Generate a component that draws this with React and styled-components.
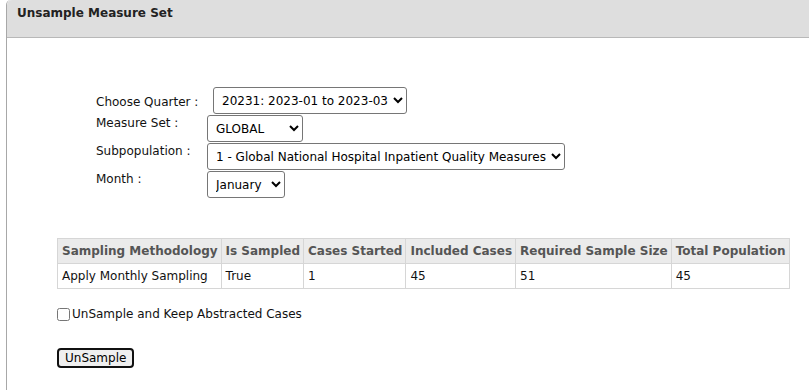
import React from 'react';
import styled, { createGlobalStyle } from 'styled-components';

const GlobalStyle = createGlobalStyle`
  body {
    margin: 0;
    background: #fff;
    font-family: "DejaVu Sans", Verdana, sans-serif;
    font-size: 12px;
    color: #000;
  }
`;

const Panel = styled.div`
  margin-left: 6px;
  min-height: 390px;
  border-left: 1px solid #a8a8a8;
  border-top-left-radius: 5px;
`;

const PanelHeader = styled.div`
  height: 38px;
  box-sizing: border-box;
  padding: 6px 10px;
  background: #dedede;
  border-bottom: 1px solid #b8b8b8;
  border-top-left-radius: 5px;
  font-weight: bold;
  font-size: 12px;
  color: #222;
`;

const PanelBody = styled.div`
  padding: 49px 0 0 50px;
`;

const FormGrid = styled.div`
  display: grid;
  grid-template-columns: 111px auto;
  row-gap: 1px;
  margin-left: 39px;
  justify-content: start;
`;

const Label = styled.div`
  padding-top: ${(p) => (p.$center ? '8px' : '1px')};
  color: #111;
`;

const Select = styled.select`
  justify-self: start;
  height: 27px;
  margin-left: ${(p) => p.$offset || 0}px;
  padding: 0 2px 0 4px;
  font-family: "DejaVu Sans", Verdana, sans-serif;
  font-size: 12px;
  color: #000;
  background: #fff;
  border: 1px solid #767676;
  border-radius: 3px;
`;

const DataTable = styled.table`
  margin-top: 40px;
  border-collapse: collapse;
  border: 1px solid #cfcfcf;

  th, td {
    border: 1px solid #d6d6d6;
    padding: 5px 3px 5px 4px;
    text-align: left;
    white-space: nowrap;
  }

  th {
    background: #ebebeb;
    color: #555;
    font-weight: bold;
  }

  td {
    color: #111;
  }
`;

const CheckRow = styled.label`
  display: flex;
  align-items: center;
  gap: 2px;
  margin-top: 18px;
  color: #111;

  input {
    margin: 0;
    width: 13px;
    height: 13px;
  }
`;

const Button = styled.button`
  margin-top: 27px;
  height: 20px;
  padding: 0 6px;
  font-family: "DejaVu Sans", Verdana, sans-serif;
  font-size: 12px;
  color: #000;
  background: #efefef;
  border: 2px solid #111;
  border-radius: 4px;
`;

const columns = [
  'Sampling Methodology',
  'Is Sampled',
  'Cases Started',
  'Included Cases',
  'Required Sample Size',
  'Total Population',
];

const row = ['Apply Monthly Sampling', 'True', '1', '45', '51', '45'];

export default function App() {
  return (
    <>
      <GlobalStyle />
      <Panel>
        <PanelHeader>Unsample Measure Set</PanelHeader>
        <PanelBody>
          <FormGrid>
            <Label $center>Choose Quarter :</Label>
            <Select $offset={6} defaultValue="20231">
              <option value="20231">20231: 2023-01 to 2023-03</option>
            </Select>
            <Label>Measure Set :</Label>
            <Select defaultValue="GLOBAL">
              <option value="GLOBAL">GLOBAL&nbsp;&nbsp;&nbsp;&nbsp;&nbsp;</option>
            </Select>
            <Label>Subpopulation :</Label>
            <Select defaultValue="1">
              <option value="1">1 - Global National Hospital Inpatient Quality Measures</option>
            </Select>
            <Label>Month :</Label>
            <Select defaultValue="1">
              <option value="1">January&nbsp;</option>
            </Select>
          </FormGrid>

          <DataTable>
            <thead>
              <tr>
                {columns.map((c) => (
                  <th key={c}>{c}</th>
                ))}
              </tr>
            </thead>
            <tbody>
              <tr>
                {row.map((v, i) => (
                  <td key={i}>{v}</td>
                ))}
              </tr>
            </tbody>
          </DataTable>

          <CheckRow>
            <input type="checkbox" />
            UnSample and Keep Abstracted Cases
          </CheckRow>

          <Button>UnSample</Button>
        </PanelBody>
      </Panel>
    </>
  );
}
